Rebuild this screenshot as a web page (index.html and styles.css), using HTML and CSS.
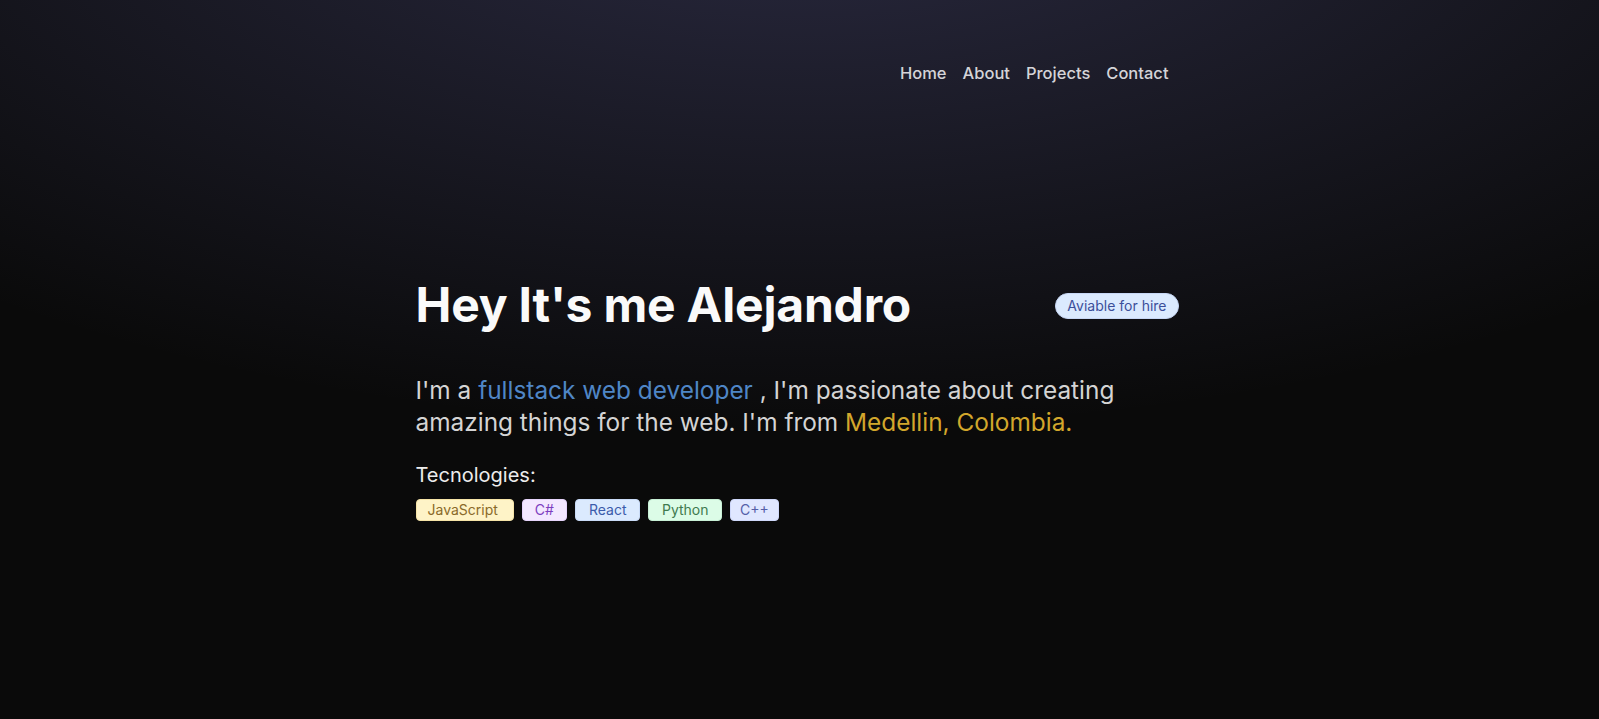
FILE: index.html
```html
<!DOCTYPE html>
<html lang="en">
<head>
<meta charset="utf-8">
<title>Alejandro</title>
<link rel="stylesheet" href="styles.css">
</head>
<body>
<div class="page">
  <header class="header">
    <nav class="nav">
      <a class="nav-link" href="#">Home</a>
      <a class="nav-link" href="#">About</a>
      <a class="nav-link" href="#">Projects</a>
      <a class="nav-link" href="#">Contact</a>
    </nav>
  </header>
  <main class="main">
    <div class="hero-head">
      <h1 class="title">Hey It's me Alejandro</h1>
      <span class="badge">Aviable for hire</span>
    </div>
    <p class="intro">I'm a <span class="hl-blue">fullstack web developer</span> , I'm passionate about creating amazing things for the web. I'm from <span class="hl-yellow">Medellin, Colombia.</span></p>
    <h2 class="tech-title">Tecnologies:</h2>
    <ul class="tags">
      <li class="tag tag-js">JavaScript</li>
      <li class="tag tag-cs">C#</li>
      <li class="tag tag-react">React</li>
      <li class="tag tag-py">Python</li>
      <li class="tag tag-cpp">C++</li>
    </ul>
  </main>
</div>
</body>
</html>
```
FILE: styles.css
```css
* { box-sizing: border-box; }
html, body { margin: 0; padding: 0; }
body {
  font-family: Inter, "Noto Sans", sans-serif;
  background-color: #0a0a0a;
  background-image: radial-gradient(ellipse 80% 80% at 50% -20%, rgba(120,119,198,0.3), rgba(255,255,255,0));
  min-height: 100vh;
  color: #e5e5e5;
}
.page {
  width: 768px;
  margin: 0 auto;
}
.header {
  padding-top: 61px;
}
.nav {
  display: flex;
  justify-content: flex-end;
  margin-right: 7px;
}
.nav-link {
  font-size: 16.5px;
  line-height: 24px;
  font-weight: 500;
  color: #d4d4d8;
  text-decoration: none;
  padding: 0 8px;
}
.main {
  margin-top: 196px;
}
.hero-head {
  display: flex;
  justify-content: space-between;
  align-items: center;
}
.title {
  margin: 0;
  font-size: 48px;
  line-height: 48px;
  font-weight: 700;
  color: #fafafa;
  letter-spacing: -0.2px;
}
.badge {
  margin-top: 2px;
  margin-right: 5px;
  background: #dbeafe;
  color: #3b4f9a;
  font-size: 14px;
  line-height: 22px;
  padding: 1px 11px;
  border-radius: 999px;
  border: 1px solid #c7d7f5;
}
.intro {
  margin: 45px 0 0;
  font-size: 24.4px;
  line-height: 32px;
  color: #d4d4d4;
}
.hl-blue { color: #4f86c6; }
.hl-yellow { color: #d2a72c; }
.tech-title {
  margin: 23px 0 0;
  font-size: 20px;
  line-height: 28px;
  font-weight: 400;
  color: #ececec;
}
.tags {
  list-style: none;
  margin: 10px 0 0;
  padding: 0;
  display: flex;
  gap: 8px;
}
.tag {
  font-size: 14px;
  line-height: 20px;
  padding: 0 12px;
  border-radius: 4px;
  border: 1px solid transparent;
}
.tag-js { background: #fef3c7; color: #8a6a2a; border-color: #f5e4a8; padding: 0 15px 0 11px; }
.tag-cs { background: #f3e8ff; color: #7e3fc0; border-color: #e6d4fb; }
.tag-react { background: #dbeafe; color: #3b5cab; border-color: #c9dbf7; padding: 0 13px; }
.tag-py { background: #dcfce7; color: #3f7a4f; border-color: #c8f0d6; padding: 0 12.5px; }
.tag-cpp { background: #e0e7ff; color: #5560a8; border-color: #cfd8fa; padding: 0 9px; }
```
